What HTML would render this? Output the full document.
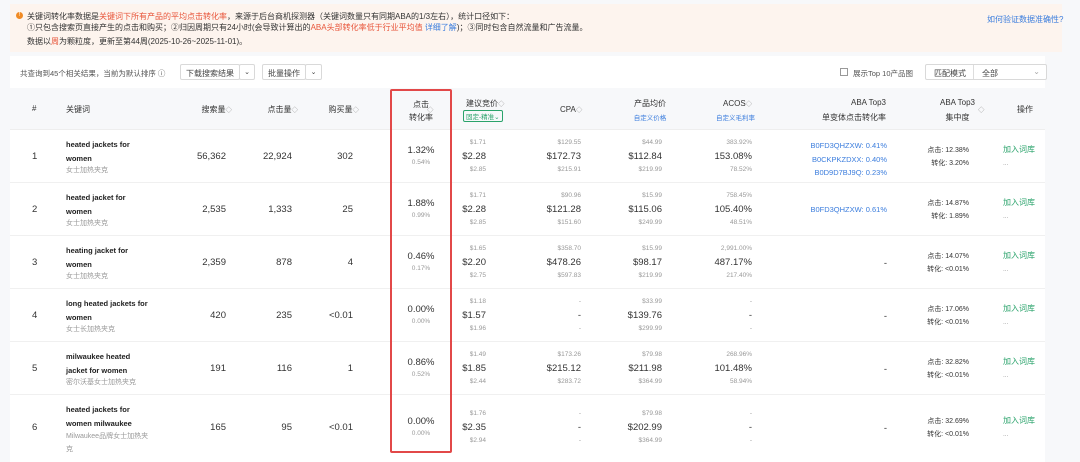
<!DOCTYPE html><html><head><meta charset="utf-8"><style>
*{margin:0;padding:0;box-sizing:border-box}
body{width:1080px;height:462px;overflow:hidden;background:#f7f8fa;font-family:"Liberation Sans","Noto Sans CJK SC",sans-serif;color:#333;position:relative}
.a{position:absolute;white-space:nowrap}
.r{text-align:right}
.c{text-align:center}
.note{position:absolute;left:10px;top:4px;width:1052px;height:48px;background:#fdf4ee;font-size:8px;color:#333}
.box{position:absolute;left:10px;top:56px;width:1035px;height:406px;background:#fff}
.hdr{position:absolute;left:10px;top:88px;width:1035px;height:42px;background:#f7f8fa;border-bottom:1px solid #eee}
.row{position:absolute;left:10px;width:1035px;border-bottom:1px solid #f0f0f0}
.v{font-size:9.5px;color:#333}
.s{font-size:6.5px;color:#999}
.kw{font-size:7.5px;font-weight:bold;color:#222}
.zh{font-size:7px;color:#999}
.h{font-size:8px;color:#333}
.blue{color:#3b7ddd}
.grn{color:#2aa36b}
.sel{position:absolute;border:1px solid #d9d9d9;background:#fff;height:16px;font-size:8px;color:#444;border-radius:2px}
</style></head><body>
<div class="note">
<div class="a" style="left:6px;top:8px;width:7px;height:7px;border-radius:50%;background:#f08a24;color:#fff;font-size:6px;text-align:center;line-height:7px">!</div>
<div class="a" style="left:17px;top:7px">关键词转化率数据是<span style="color:#e8553a">关键词下所有产品的平均点击转化率</span>，来源于后台商机探测器（关键词数量只有同期ABA的1/3左右），统计口径如下：</div>
<div class="a" style="left:17px;top:18px">①只包含搜索页直接产生的点击和购买；②归因周期只有24小时(会导致计算出的<span style="color:#e8553a">ABA头部转化率低于行业平均值</span> <span class="blue">详细了解</span>)；③同时包含自然流量和广告流量。</div>
<div class="a" style="left:17px;top:32px">数据以<span style="color:#e8553a">周</span>为颗粒度，更新至第44周(2025-10-26~2025-11-01)。</div>
<div class="a blue" style="left:977px;top:10px">如何验证数据准确性?</div>
</div>
<div class="box"></div>
<div class="a" style="left:20px;top:68px;font-size:7.5px;color:#555">共查询到45个相关结果，当前为默认排序 ⓘ</div>
<div class="sel" style="left:180px;top:64px;width:60px;padding:3px 5px">下载搜索结果</div><div class="sel" style="left:239px;top:64px;width:16px;text-align:center;font-size:7px;padding-top:3px">⌄</div>
<div class="sel" style="left:262px;top:64px;width:44px;padding:3px 5px">批量操作</div><div class="sel" style="left:305px;top:64px;width:17px;text-align:center;font-size:7px;padding-top:3px">⌄</div>
<div class="a" style="left:840px;top:68px;width:8px;height:8px;border:1px solid #999"></div>
<div class="a" style="left:853px;top:68px;font-size:7.5px;color:#555">展示Top 10产品图</div>
<div class="sel" style="left:925px;top:64px;width:122px;padding:3px 8px">匹配模式<span style="position:absolute;left:47px;top:0;height:14px;border-left:1px solid #ddd"></span><span style="position:absolute;left:56px;top:3px">全部</span><span style="position:absolute;right:6px;top:2px;color:#aaa">⌄</span></div>
<div class="hdr"></div>
<div class="a h" style="left:32px;top:104px">#</div>
<div class="a h" style="left:66px;top:104px">关键词</div>
<div class="a h r" style="left:170px;width:62px;top:104px">搜索量<span class="s">◇</span></div>
<div class="a h r" style="left:235px;width:63px;top:104px">点击量<span class="s">◇</span></div>
<div class="a h r" style="left:300px;width:59px;top:104px">购买量<span class="s">◇</span></div>
<div class="a h c" style="left:390px;width:62px;top:98px;line-height:13px">点击<br>转化率</div><div class="a s" style="left:427px;top:104px">◇</div>
<div class="a h" style="left:466px;top:98px">建议竞价<span class="s">◇</span></div>
<div class="a" style="left:463px;top:110px;font-size:6.5px;color:#2aa36b;border:1px solid #2aa36b;padding:0 2px;border-radius:2px">固定-精准⌄</div>
<div class="a h" style="left:560px;top:104px">CPA<span class="s">◇</span></div>
<div class="a h c" style="left:620px;width:60px;top:98px">产品均价</div><div class="a blue c" style="left:620px;width:60px;top:112px;font-size:6.5px">自定义价格</div>
<div class="a h" style="left:723px;top:98px">ACOS<span class="s">◇</span></div><div class="a blue" style="left:716px;top:112px;font-size:6.5px">自定义毛利率</div>
<div class="a h r" style="left:780px;width:106px;top:98px">ABA Top3</div><div class="a h r" style="left:780px;width:106px;top:112px">单变体点击转化率</div>
<div class="a h c" style="left:935px;width:45px;top:98px">ABA Top3</div><div class="a h c" style="left:935px;width:45px;top:112px">集中度</div><div class="a s" style="left:978px;top:104px">◇</div>
<div class="a h" style="left:1017px;top:104px">操作</div>

<div class="row" style="top:130px;height:53px"></div>
<div class="row" style="top:183px;height:53px"></div>
<div class="row" style="top:236px;height:53px"></div>
<div class="row" style="top:289px;height:53px"></div>
<div class="row" style="top:342px;height:53px"></div>

<!-- row1 -->
<div class="a v" style="left:32px;top:151px">1</div>
<div class="a kw" style="left:66px;top:138px;line-height:13.5px">heated jackets for<br>women</div><div class="a zh" style="left:66px;top:165px">女士加热夹克</div>
<div class="a v r" style="left:150px;width:76px;top:151px">56,362</div>
<div class="a v r" style="left:230px;width:62px;top:151px">22,924</div>
<div class="a v r" style="left:300px;width:53px;top:151px">302</div>
<div class="a v c" style="left:390px;width:62px;top:145px">1.32%</div><div class="a s c" style="left:390px;width:62px;top:159px">0.54%</div>
<div class="a s r" style="left:440px;width:46px;top:139px">$1.71</div><div class="a v r" style="left:440px;width:46px;top:151px">$2.28</div><div class="a s r" style="left:440px;width:46px;top:166px">$2.85</div>
<div class="a s r" style="left:540px;width:41px;top:139px">$129.55</div><div class="a v r" style="left:520px;width:61px;top:151px">$172.73</div><div class="a s r" style="left:540px;width:41px;top:166px">$215.91</div>
<div class="a s r" style="left:620px;width:42px;top:139px">$44.99</div><div class="a v r" style="left:600px;width:62px;top:151px">$112.84</div><div class="a s r" style="left:620px;width:42px;top:166px">$219.99</div>
<div class="a s r" style="left:700px;width:52px;top:139px">383.92%</div><div class="a v r" style="left:690px;width:62px;top:151px">153.08%</div><div class="a s r" style="left:700px;width:52px;top:166px">78.52%</div>
<div class="a blue r" style="left:780px;width:107px;top:139px;font-size:7.5px;line-height:13.5px">B0FD3QHZXW: 0.41%<br>B0CKPKZDXX: 0.40%<br>B0D9D7BJ9Q: 0.23%</div>
<div class="a r" style="left:920px;width:49px;top:144px;font-size:7px;line-height:13px">点击: 12.38%<br>转化: 3.20%</div>
<div class="a grn" style="left:1003px;top:144px;font-size:8px">加入词库</div><div class="a s" style="left:1003px;top:160px">...</div>

<!-- row2 -->
<div class="a v" style="left:32px;top:204px">2</div>
<div class="a kw" style="left:66px;top:191px;line-height:13.5px">heated jacket for<br>women</div><div class="a zh" style="left:66px;top:218px">女士加热夹克</div>
<div class="a v r" style="left:150px;width:76px;top:204px">2,535</div>
<div class="a v r" style="left:230px;width:62px;top:204px">1,333</div>
<div class="a v r" style="left:300px;width:53px;top:204px">25</div>
<div class="a v c" style="left:390px;width:62px;top:198px">1.88%</div><div class="a s c" style="left:390px;width:62px;top:212px">0.99%</div>
<div class="a s r" style="left:440px;width:46px;top:192px">$1.71</div><div class="a v r" style="left:440px;width:46px;top:204px">$2.28</div><div class="a s r" style="left:440px;width:46px;top:219px">$2.85</div>
<div class="a s r" style="left:540px;width:41px;top:192px">$90.96</div><div class="a v r" style="left:520px;width:61px;top:204px">$121.28</div><div class="a s r" style="left:540px;width:41px;top:219px">$151.60</div>
<div class="a s r" style="left:620px;width:42px;top:192px">$15.99</div><div class="a v r" style="left:600px;width:62px;top:204px">$115.06</div><div class="a s r" style="left:620px;width:42px;top:219px">$249.99</div>
<div class="a s r" style="left:700px;width:52px;top:192px">758.45%</div><div class="a v r" style="left:690px;width:62px;top:204px">105.40%</div><div class="a s r" style="left:700px;width:52px;top:219px">48.51%</div>
<div class="a blue r" style="left:780px;width:107px;top:205px;font-size:7.5px">B0FD3QHZXW: 0.61%</div>
<div class="a r" style="left:920px;width:49px;top:197px;font-size:7px;line-height:13px">点击: 14.87%<br>转化: 1.89%</div>
<div class="a grn" style="left:1003px;top:197px;font-size:8px">加入词库</div><div class="a s" style="left:1003px;top:213px">...</div>

<!-- row3 -->
<div class="a v" style="left:32px;top:257px">3</div>
<div class="a kw" style="left:66px;top:244px;line-height:13.5px">heating jacket for<br>women</div><div class="a zh" style="left:66px;top:271px">女士加热夹克</div>
<div class="a v r" style="left:150px;width:76px;top:257px">2,359</div>
<div class="a v r" style="left:230px;width:62px;top:257px">878</div>
<div class="a v r" style="left:300px;width:53px;top:257px">4</div>
<div class="a v c" style="left:390px;width:62px;top:251px">0.46%</div><div class="a s c" style="left:390px;width:62px;top:265px">0.17%</div>
<div class="a s r" style="left:440px;width:46px;top:245px">$1.65</div><div class="a v r" style="left:440px;width:46px;top:257px">$2.20</div><div class="a s r" style="left:440px;width:46px;top:272px">$2.75</div>
<div class="a s r" style="left:540px;width:41px;top:245px">$358.70</div><div class="a v r" style="left:520px;width:61px;top:257px">$478.26</div><div class="a s r" style="left:540px;width:41px;top:272px">$597.83</div>
<div class="a s r" style="left:620px;width:42px;top:245px">$15.99</div><div class="a v r" style="left:600px;width:62px;top:257px">$98.17</div><div class="a s r" style="left:620px;width:42px;top:272px">$219.99</div>
<div class="a s r" style="left:690px;width:62px;top:245px">2,991.00%</div><div class="a v r" style="left:690px;width:62px;top:257px">487.17%</div><div class="a s r" style="left:700px;width:52px;top:272px">217.40%</div>
<div class="a v r" style="left:860px;width:27px;top:258px">-</div>
<div class="a r" style="left:920px;width:49px;top:250px;font-size:7px;line-height:13px">点击: 14.07%<br>转化: &lt;0.01%</div>
<div class="a grn" style="left:1003px;top:250px;font-size:8px">加入词库</div><div class="a s" style="left:1003px;top:266px">...</div>

<!-- row4 -->
<div class="a v" style="left:32px;top:310px">4</div>
<div class="a kw" style="left:66px;top:297px;line-height:13.5px">long heated jackets for<br>women</div><div class="a zh" style="left:66px;top:324px">女士长加热夹克</div>
<div class="a v r" style="left:150px;width:76px;top:310px">420</div>
<div class="a v r" style="left:230px;width:62px;top:310px">235</div>
<div class="a v r" style="left:300px;width:53px;top:310px">&lt;0.01</div>
<div class="a v c" style="left:390px;width:62px;top:304px">0.00%</div><div class="a s c" style="left:390px;width:62px;top:318px">0.00%</div>
<div class="a s r" style="left:440px;width:46px;top:298px">$1.18</div><div class="a v r" style="left:440px;width:46px;top:310px">$1.57</div><div class="a s r" style="left:440px;width:46px;top:325px">$1.96</div>
<div class="a s r" style="left:540px;width:41px;top:298px">-</div><div class="a v r" style="left:520px;width:61px;top:310px">-</div><div class="a s r" style="left:540px;width:41px;top:325px">-</div>
<div class="a s r" style="left:620px;width:42px;top:298px">$33.99</div><div class="a v r" style="left:600px;width:62px;top:310px">$139.76</div><div class="a s r" style="left:620px;width:42px;top:325px">$299.99</div>
<div class="a s r" style="left:700px;width:52px;top:298px">-</div><div class="a v r" style="left:690px;width:62px;top:310px">-</div><div class="a s r" style="left:700px;width:52px;top:325px">-</div>
<div class="a v r" style="left:860px;width:27px;top:311px">-</div>
<div class="a r" style="left:920px;width:49px;top:303px;font-size:7px;line-height:13px">点击: 17.06%<br>转化: &lt;0.01%</div>
<div class="a grn" style="left:1003px;top:303px;font-size:8px">加入词库</div><div class="a s" style="left:1003px;top:319px">...</div>

<!-- row5 -->
<div class="a v" style="left:32px;top:363px">5</div>
<div class="a kw" style="left:66px;top:350px;line-height:13.5px">milwaukee heated<br>jacket for women</div><div class="a zh" style="left:66px;top:377px">密尔沃基女士加热夹克</div>
<div class="a v r" style="left:150px;width:76px;top:363px">191</div>
<div class="a v r" style="left:230px;width:62px;top:363px">116</div>
<div class="a v r" style="left:300px;width:53px;top:363px">1</div>
<div class="a v c" style="left:390px;width:62px;top:357px">0.86%</div><div class="a s c" style="left:390px;width:62px;top:371px">0.52%</div>
<div class="a s r" style="left:440px;width:46px;top:351px">$1.49</div><div class="a v r" style="left:440px;width:46px;top:363px">$1.85</div><div class="a s r" style="left:440px;width:46px;top:378px">$2.44</div>
<div class="a s r" style="left:540px;width:41px;top:351px">$173.26</div><div class="a v r" style="left:520px;width:61px;top:363px">$215.12</div><div class="a s r" style="left:540px;width:41px;top:378px">$283.72</div>
<div class="a s r" style="left:620px;width:42px;top:351px">$79.98</div><div class="a v r" style="left:600px;width:62px;top:363px">$211.98</div><div class="a s r" style="left:620px;width:42px;top:378px">$364.99</div>
<div class="a s r" style="left:700px;width:52px;top:351px">268.96%</div><div class="a v r" style="left:690px;width:62px;top:363px">101.48%</div><div class="a s r" style="left:700px;width:52px;top:378px">58.94%</div>
<div class="a v r" style="left:860px;width:27px;top:364px">-</div>
<div class="a r" style="left:920px;width:49px;top:356px;font-size:7px;line-height:13px">点击: 32.82%<br>转化: &lt;0.01%</div>
<div class="a grn" style="left:1003px;top:356px;font-size:8px">加入词库</div><div class="a s" style="left:1003px;top:372px">...</div>

<!-- row6 -->
<div class="a v" style="left:32px;top:422px">6</div>
<div class="a kw" style="left:66px;top:403px;line-height:13.5px">heated jackets for<br>women milwaukee</div><div class="a zh" style="left:66px;top:430px;line-height:13px">Milwaukee品牌女士加热夹<br>克</div>
<div class="a v r" style="left:150px;width:76px;top:422px">165</div>
<div class="a v r" style="left:230px;width:62px;top:422px">95</div>
<div class="a v r" style="left:300px;width:53px;top:422px">&lt;0.01</div>
<div class="a v c" style="left:390px;width:62px;top:416px">0.00%</div><div class="a s c" style="left:390px;width:62px;top:430px">0.00%</div>
<div class="a s r" style="left:440px;width:46px;top:410px">$1.76</div><div class="a v r" style="left:440px;width:46px;top:422px">$2.35</div><div class="a s r" style="left:440px;width:46px;top:437px">$2.94</div>
<div class="a s r" style="left:540px;width:41px;top:410px">-</div><div class="a v r" style="left:520px;width:61px;top:422px">-</div><div class="a s r" style="left:540px;width:41px;top:437px">-</div>
<div class="a s r" style="left:620px;width:42px;top:410px">$79.98</div><div class="a v r" style="left:600px;width:62px;top:422px">$202.99</div><div class="a s r" style="left:620px;width:42px;top:437px">$364.99</div>
<div class="a s r" style="left:700px;width:52px;top:410px">-</div><div class="a v r" style="left:690px;width:62px;top:422px">-</div><div class="a s r" style="left:700px;width:52px;top:437px">-</div>
<div class="a v r" style="left:860px;width:27px;top:423px">-</div>
<div class="a r" style="left:920px;width:49px;top:415px;font-size:7px;line-height:13px">点击: 32.69%<br>转化: &lt;0.01%</div>
<div class="a grn" style="left:1003px;top:415px;font-size:8px">加入词库</div><div class="a s" style="left:1003px;top:431px">...</div>

<div class="a" style="left:390px;top:89px;width:62px;height:364px;border:2px solid #e24848;border-radius:2px"></div>
</body></html>
